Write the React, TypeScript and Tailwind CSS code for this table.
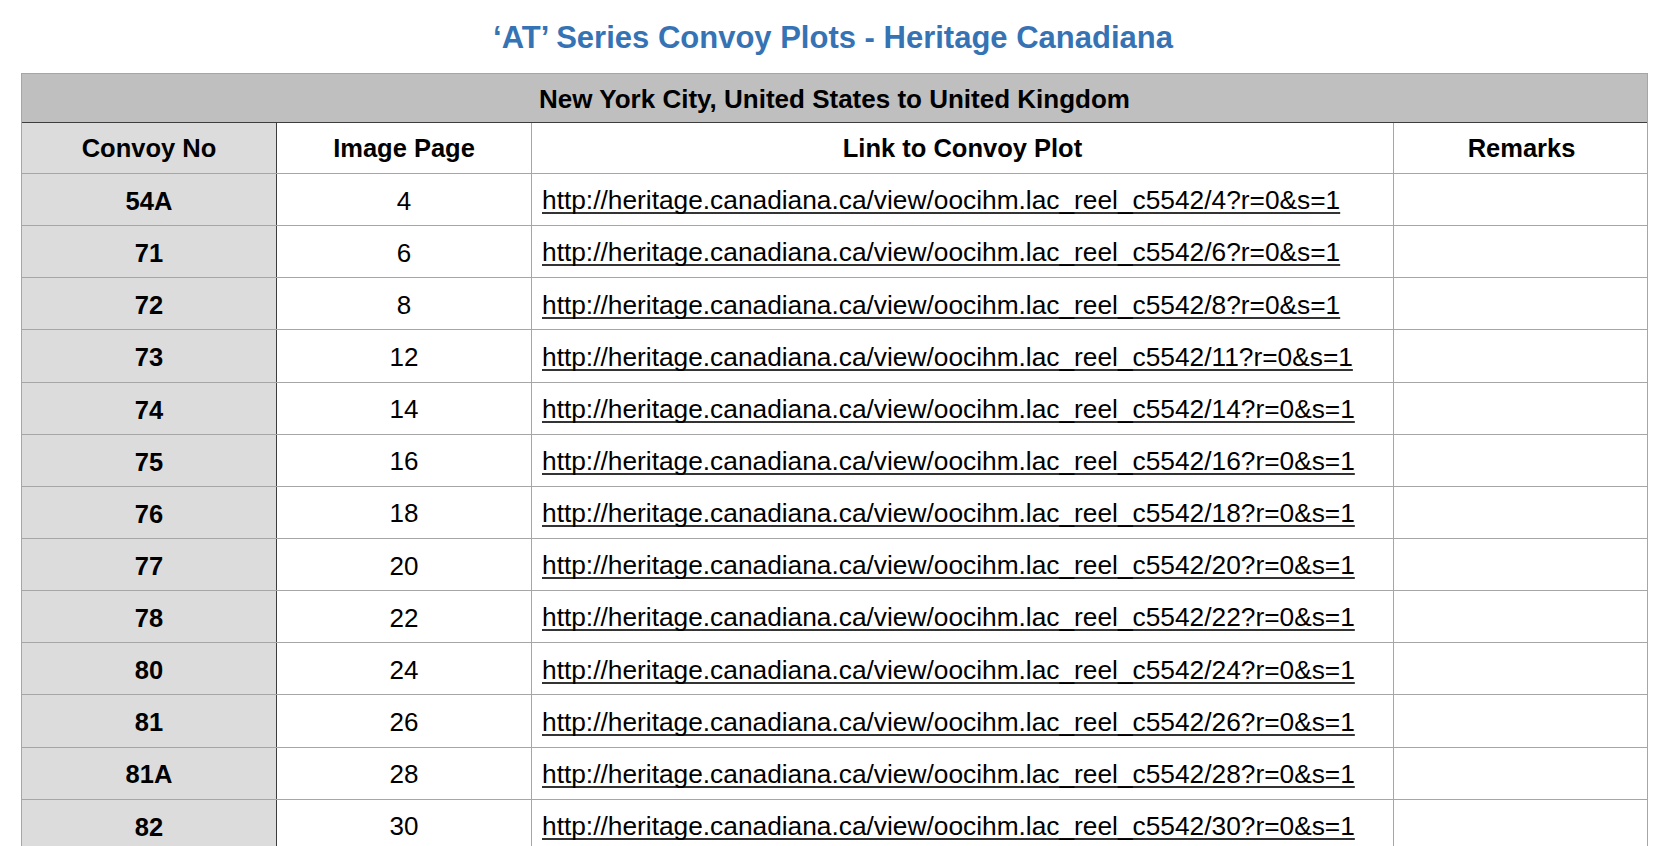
import React from "react";

const rows: [string, string, string][] = [
  ["54A", "4", "4"],
  ["71", "6", "6"],
  ["72", "8", "8"],
  ["73", "12", "11"],
  ["74", "14", "14"],
  ["75", "16", "16"],
  ["76", "18", "18"],
  ["77", "20", "20"],
  ["78", "22", "22"],
  ["80", "24", "24"],
  ["81", "26", "26"],
  ["81A", "28", "28"],
  ["82", "30", "30"],
];

export default function App() {
  return (
    <div
      className="min-h-screen bg-white text-black"
      style={{ fontFamily: '"Liberation Sans", Arial, Helvetica, sans-serif' }}
    >
      <div className="h-[73px] flex items-start justify-center pt-[20px]">
        <h1 className="text-[31px] leading-[36px] font-bold text-[#3673b5]">
          ‘AT’ Series Convoy Plots - Heritage Canadiana
        </h1>
      </div>
      <div className="ml-[21px] w-[1627px] border-t border-l border-r border-[#a6a6a6]">
        <div className="h-[49px] pt-[3px] bg-[#bfbfbf] border-b border-[#3d3d3d] flex items-center justify-center text-[26px] font-bold">
          New York City, United States to United Kingdom
        </div>
        <div className="grid grid-cols-[255px_255px_862px_255px] h-[51px] border-b border-[#a6a6a6] text-[25.5px] font-bold">
          <div className="bg-[#dcdcdc] border-r border-[#3d3d3d] flex items-center justify-center">
            Convoy No
          </div>
          <div className="border-r border-[#a6a6a6] flex items-center justify-center">
            Image Page
          </div>
          <div className="border-r border-[#a6a6a6] flex items-center justify-center">
            Link to Convoy Plot
          </div>
          <div className="flex items-center justify-center">Remarks</div>
        </div>
        {rows.map(([no, page, link]) => (
          <div
            key={no}
            className="grid grid-cols-[255px_255px_862px_255px] h-[52.15px] border-b border-[#a6a6a6]"
          >
            <div className="bg-[#dcdcdc] border-r border-[#3d3d3d] flex items-center justify-center pt-[3px] text-[25.5px] font-bold">
              {no}
            </div>
            <div className="border-r border-[#a6a6a6] flex items-center justify-center pt-[3px] text-[26px]">
              {page}
            </div>
            <div className="border-r border-[#a6a6a6] flex items-center pl-[10px] pt-[3px] text-[26.3px]">
              <a
                href="#"
                className="text-black underline decoration-[#333] decoration-[1.5px] underline-offset-[3px] [text-decoration-skip-ink:none] whitespace-nowrap"
              >
                {`http://heritage.canadiana.ca/view/oocihm.lac_reel_c5542/${link}?r=0&s=1`}
              </a>
            </div>
            <div />
          </div>
        ))}
      </div>
    </div>
  );
}
